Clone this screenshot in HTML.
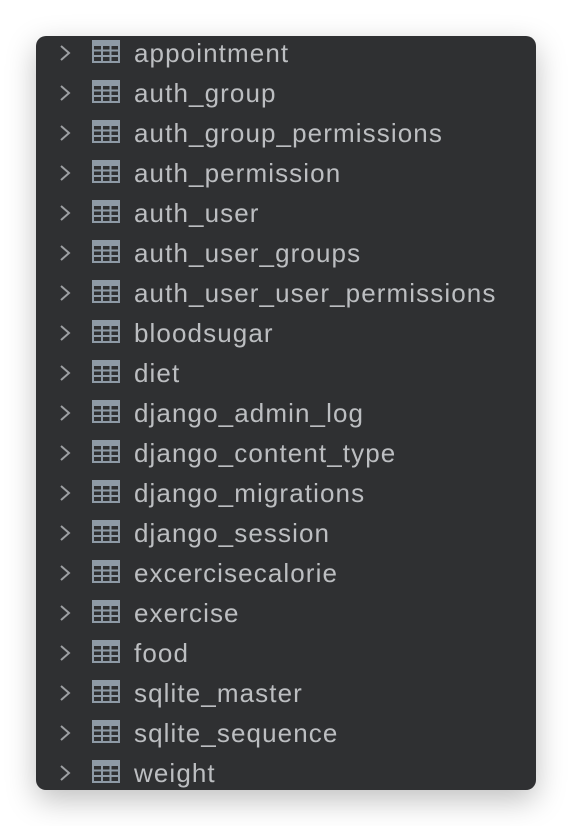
<!DOCTYPE html>
<html><head><style>
body{margin:0;width:572px;height:826px;background:#fff;position:relative;overflow:hidden;font-family:"Liberation Sans",sans-serif}
.panel{position:absolute;left:36px;top:36px;width:500px;height:754px;background:#2f3032;border-radius:10px;box-shadow:0 10px 30px rgba(0,0,0,.25)}
.row{position:absolute;left:0;height:40px;width:500px}
.chev{position:absolute;left:22px;top:8px}
.ico{position:absolute;left:56px;top:4px}
.t{position:absolute;left:98px;top:1px;font-size:26px;letter-spacing:1.1px;color:#bcbec1;line-height:32px}
</style></head><body><div class="panel" id="p"></div>
<script>
var n=["appointment","auth_group","auth_group_permissions","auth_permission","auth_user","auth_user_groups","auth_user_user_permissions","bloodsugar","diet","django_admin_log","django_content_type","django_migrations","django_session","excercisecalorie","exercise","food","sqlite_master","sqlite_sequence","weight"];
var h="";
n.forEach(function(s,i){h+='<div class="row" style="top:'+i*40+'px"><svg class="chev" width="14" height="18"><path d="M3 2 L11 9 L3 16" stroke="#9ea0a3" stroke-width="2" fill="none"/></svg><svg class="ico" width="28" height="24"><rect x="0" y="0" width="28" height="23" fill="#8e9aa6"/><g fill="#2f3032"><rect x="2" y="6" width="7" height="3.5"/><rect x="11" y="6" width="6.5" height="3.5"/><rect x="19.5" y="6" width="6.5" height="3.5"/><rect x="2" y="11.5" width="7" height="3.5"/><rect x="11" y="11.5" width="6.5" height="3.5"/><rect x="19.5" y="11.5" width="6.5" height="3.5"/><rect x="2" y="17" width="7" height="4"/><rect x="11" y="17" width="6.5" height="4"/><rect x="19.5" y="17" width="6.5" height="4"/></g></svg><div class="t">'+s+'</div></div>';});
document.getElementById("p").innerHTML=h;
</script></body></html>
